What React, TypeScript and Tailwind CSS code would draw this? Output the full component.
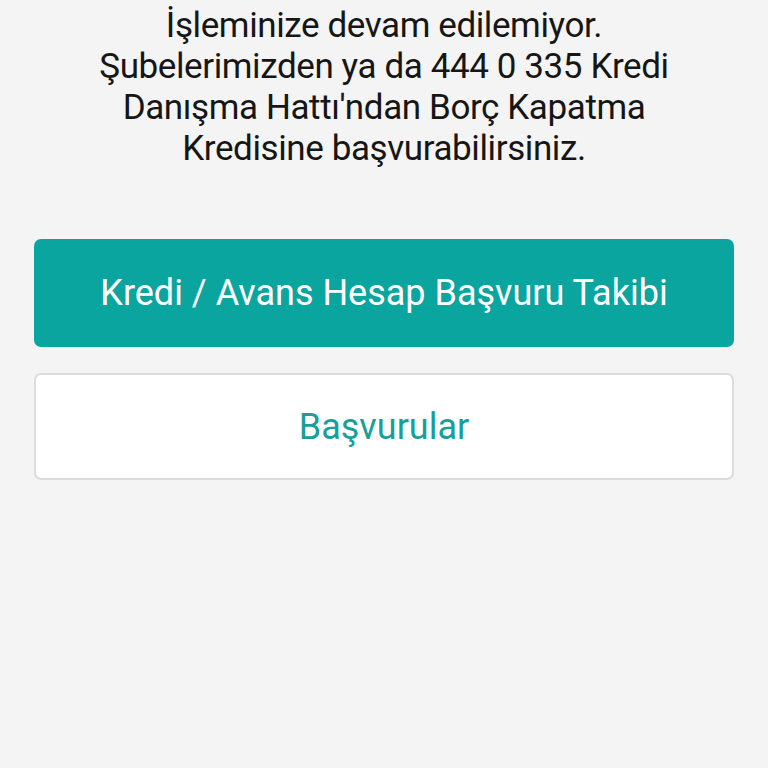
export default function App() {
  return (
    <div className="min-h-[768px] w-full bg-[#f4f4f4] px-[34px] pt-[5px] font-['Roboto',sans-serif]">
      <p className="text-center text-[35px] leading-[41px] tracking-[-0.4px] text-[#161616]">
        İşleminize devam edilemiyor.
        <br />
        Şubelerimizden ya da 444 0 335 Kredi
        <br />
        Danışma Hattı'ndan Borç Kapatma
        <br />
        Kredisine başvurabilirsiniz.
      </p>

      <div className="mt-[70px] flex flex-col gap-[26px]">
        <button className="flex h-[108px] w-full items-center justify-center rounded-[7px] bg-[#0aa59f] text-[36px] text-white">
          Kredi / Avans Hesap Başvuru Takibi
        </button>
        <button className="flex h-[107px] w-full items-center justify-center rounded-[7px] border-2 border-[#dcdcdc] bg-white text-[36px] text-[#17a09b]">
          Başvurular
        </button>
      </div>
    </div>
  );
}
